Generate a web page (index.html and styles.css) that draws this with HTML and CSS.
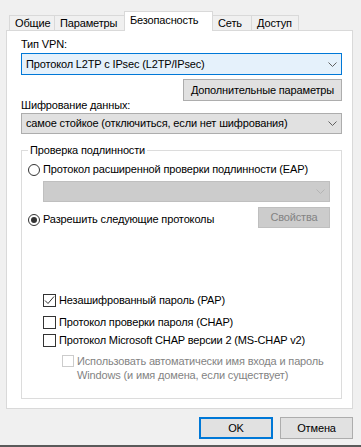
FILE: index.html
```html
<!DOCTYPE html>
<html lang="ru">
<head>
    <meta charset="UTF-8">
    <title>Свойства VPN</title>
    <link rel="stylesheet" href="styles.css">
</head>
<body>
    <!-- Вкладки -->
    <div class="tabs">
        <div class="tab tab-general">Общие</div>
        <div class="tab tab-params">Параметры</div>
        <div class="tab tab-security active">Безопасность</div>
        <div class="tab tab-net">Сеть</div>
        <div class="tab tab-access">Доступ</div>
    </div>

    <div class="panel">
        <div class="label">Тип VPN:</div>
        <div class="combo focused">
            <span>Протокол L2TP с IPsec (L2TP/IPsec)</span>
            <svg class="chevron" width="9" height="5" viewBox="0 0 9 5"><path d="M0.5 0.5 L4.5 4.5 L8.5 0.5" fill="none" stroke="#606060"/></svg>
        </div>
        <div class="actions">
            <button class="btn btn-extra">Дополнительные параметры</button>
        </div>

        <div class="label label-enc">Шифрование данных:</div>
        <div class="combo combo-enc">
            <span>самое стойкое (отключиться, если нет шифрования)</span>
            <svg class="chevron" width="9" height="5" viewBox="0 0 9 5"><path d="M0.5 0.5 L4.5 4.5 L8.5 0.5" fill="none" stroke="#606060"/></svg>
        </div>

        <!-- Проверка подлинности -->
        <fieldset class="group">
            <legend>Проверка подлинности</legend>

            <div class="radio radio-eap">
                <span class="radio-mark"></span>
                Протокол расширенной проверки подлинности (EAP)
            </div>
            <div class="combo combo-eap disabled">
                <svg class="chevron" width="9" height="5" viewBox="0 0 9 5"><path d="M0.5 0.5 L4.5 4.5 L8.5 0.5" fill="none" stroke="#b4b4b4"/></svg>
            </div>

            <div class="radio-row">
                <div class="radio radio-allow">
                    <span class="radio-mark checked"></span>
                    Разрешить следующие протоколы
                </div>
                <button class="btn btn-props" disabled>Свойства</button>
            </div>

            <div class="check check-pap">
                <span class="box"><svg width="11" height="11" viewBox="0 0 11 11"><path d="M1 5.5 L4 8.5 L10 1.5" fill="none" stroke="#333" stroke-width="1"/></svg></span>
                Незашифрованный пароль (PAP)
            </div>
            <div class="check check-chap">
                <span class="box"></span>
                Протокол проверки пароля (CHAP)
            </div>
            <div class="check check-ms">
                <span class="box"></span>
                Протокол Microsoft CHAP версии 2 (MS-CHAP v2)
            </div>
            <div class="check sub disabled">
                <span class="box"></span>
                <span>Использовать автоматически имя входа и пароль<br>Windows (и имя домена, если существует)</span>
            </div>
        </fieldset>
    </div>

    <div class="footer">
        <button class="btn btn-ok">OK</button>
        <button class="btn btn-cancel">Отмена</button>
    </div>
    <div class="frame-edge"></div>
</body>
</html>
```

FILE: styles.css
```css
/* Общие стили */
* {
    box-sizing: border-box;
}

body {
    margin: 0;
    width: 361px;
    height: 447px;
    overflow: hidden;
    background: #f0f0f0;
    font-family: 'Liberation Sans', Arial, sans-serif;
    font-size: 11px;
    letter-spacing: -0.15px;
    line-height: 15px;
    color: #000;
}

/* Вкладки */
.tabs {
    display: flex;
    align-items: flex-end;
    padding: 11px 0 0 9px;
    height: 30px;
}

.tab {
    height: 15px;
    line-height: 14px;
    padding: 0 5px;
    border: 1px solid #d9d9d9;
    border-bottom: none;
    margin-right: -1px;
    background: #f0f0f0;
    white-space: nowrap;
}

.tab-general { width: 46px; }
.tab-params { width: 71px; }
.tab-net { width: 40px; }
.tab-access { width: 48px; }

.tab.active {
    width: 89px;
    height: 20px;
    line-height: 17px;
    margin-bottom: -1px;
    background: #fff;
    position: relative;
    z-index: 1;
}

/* Панель */
.panel {
    margin: 0 8px 0 6px;
    height: 379px;
    padding: 6px 10px 0 14px;
    background: #fff;
    border: 1px solid #d9d9d9;
}

.label {
    height: 15px;
    margin-bottom: 1px;
}

.label-enc {
    margin-top: -3px;
    margin-bottom: 0;
}

/* Выпадающие списки */
.combo {
    display: flex;
    align-items: center;
    justify-content: space-between;
    height: 22px;
    padding: 0 4px;
    border: 1px solid #adadad;
    background: #e1e1e1;
    white-space: nowrap;
}

.combo.focused {
    border-color: #0078d7;
    background: #e5f1fb;
}

.combo-enc {
    height: 21px;
}

.combo-eap {
    height: 21px;
    justify-content: flex-end;
    margin: 4px 11px 0 15px;
}

.combo.disabled {
    border-color: #bfbfbf;
    background: #cccccc;
}

/* Кнопки */
.btn {
    font: inherit;
    letter-spacing: inherit;
    color: #000;
    height: 22px;
    padding: 0;
    border: 1px solid #adadad;
    background: #e1e1e1;
}

.actions {
    display: flex;
    justify-content: flex-end;
    margin-top: 4px;
}

.btn-extra {
    width: 159px;
}

.btn-props {
    width: 72px;
    height: 21px;
    margin-right: 11px;
}

.btn:disabled {
    color: #838383;
    border-color: #bfbfbf;
    background: #cccccc;
}

/* Группа */
.group {
    margin: 9px 0 0;
    padding: 4px 0 0 6px;
    height: 256px;
    border: 1px solid #dcdcdc;
}

.group legend {
    padding: 0 2px;
    line-height: 15px;
}

.radio {
    display: flex;
    align-items: center;
    height: 15px;
    white-space: nowrap;
}

.radio-mark {
    width: 12px;
    height: 12px;
    margin-right: 3px;
    border: 1px solid #333;
    border-radius: 50%;
    display: flex;
    align-items: center;
    justify-content: center;
    background: #fff;
}

.radio-mark.checked::after {
    content: "";
    width: 6px;
    height: 6px;
    border-radius: 50%;
    background: #333;
}

.radio-row {
    display: flex;
    justify-content: space-between;
    align-items: flex-start;
    margin-top: 5px;
}

.radio-allow {
    margin-top: 5px;
}

/* Флажки */
.check {
    display: flex;
    align-items: center;
    height: 15px;
    margin-left: 15px;
    white-space: nowrap;
}

.check .box {
    flex: none;
    width: 13px;
    height: 13px;
    margin-right: 3px;
    border: 1px solid #333;
    background: #fff;
    display: flex;
    align-items: center;
    justify-content: center;
}

.check-pap { margin-top: 65px; }
.check-chap { margin-top: 7px; }
.check-ms { margin-top: 3px; }

.check.sub {
    margin: 6px 0 0 34px;
    height: auto;
    align-items: flex-start;
    color: #838383;
    line-height: 14px;
}

.check.sub .box {
    width: 12px;
    height: 12px;
    margin-top: 1px;
    border-color: #cccccc;
}

/* Нижние кнопки */
.footer {
    display: flex;
    justify-content: flex-end;
    gap: 7px;
    padding: 8px 8px 0 0;
}

.btn-ok {
    width: 74px;
    border: 2px solid #0078d7;
}

.btn-cancel {
    width: 73px;
}

.frame-edge {
    margin-top: 6px;
    height: 2px;
    background: #5a5a5a;
}
```
